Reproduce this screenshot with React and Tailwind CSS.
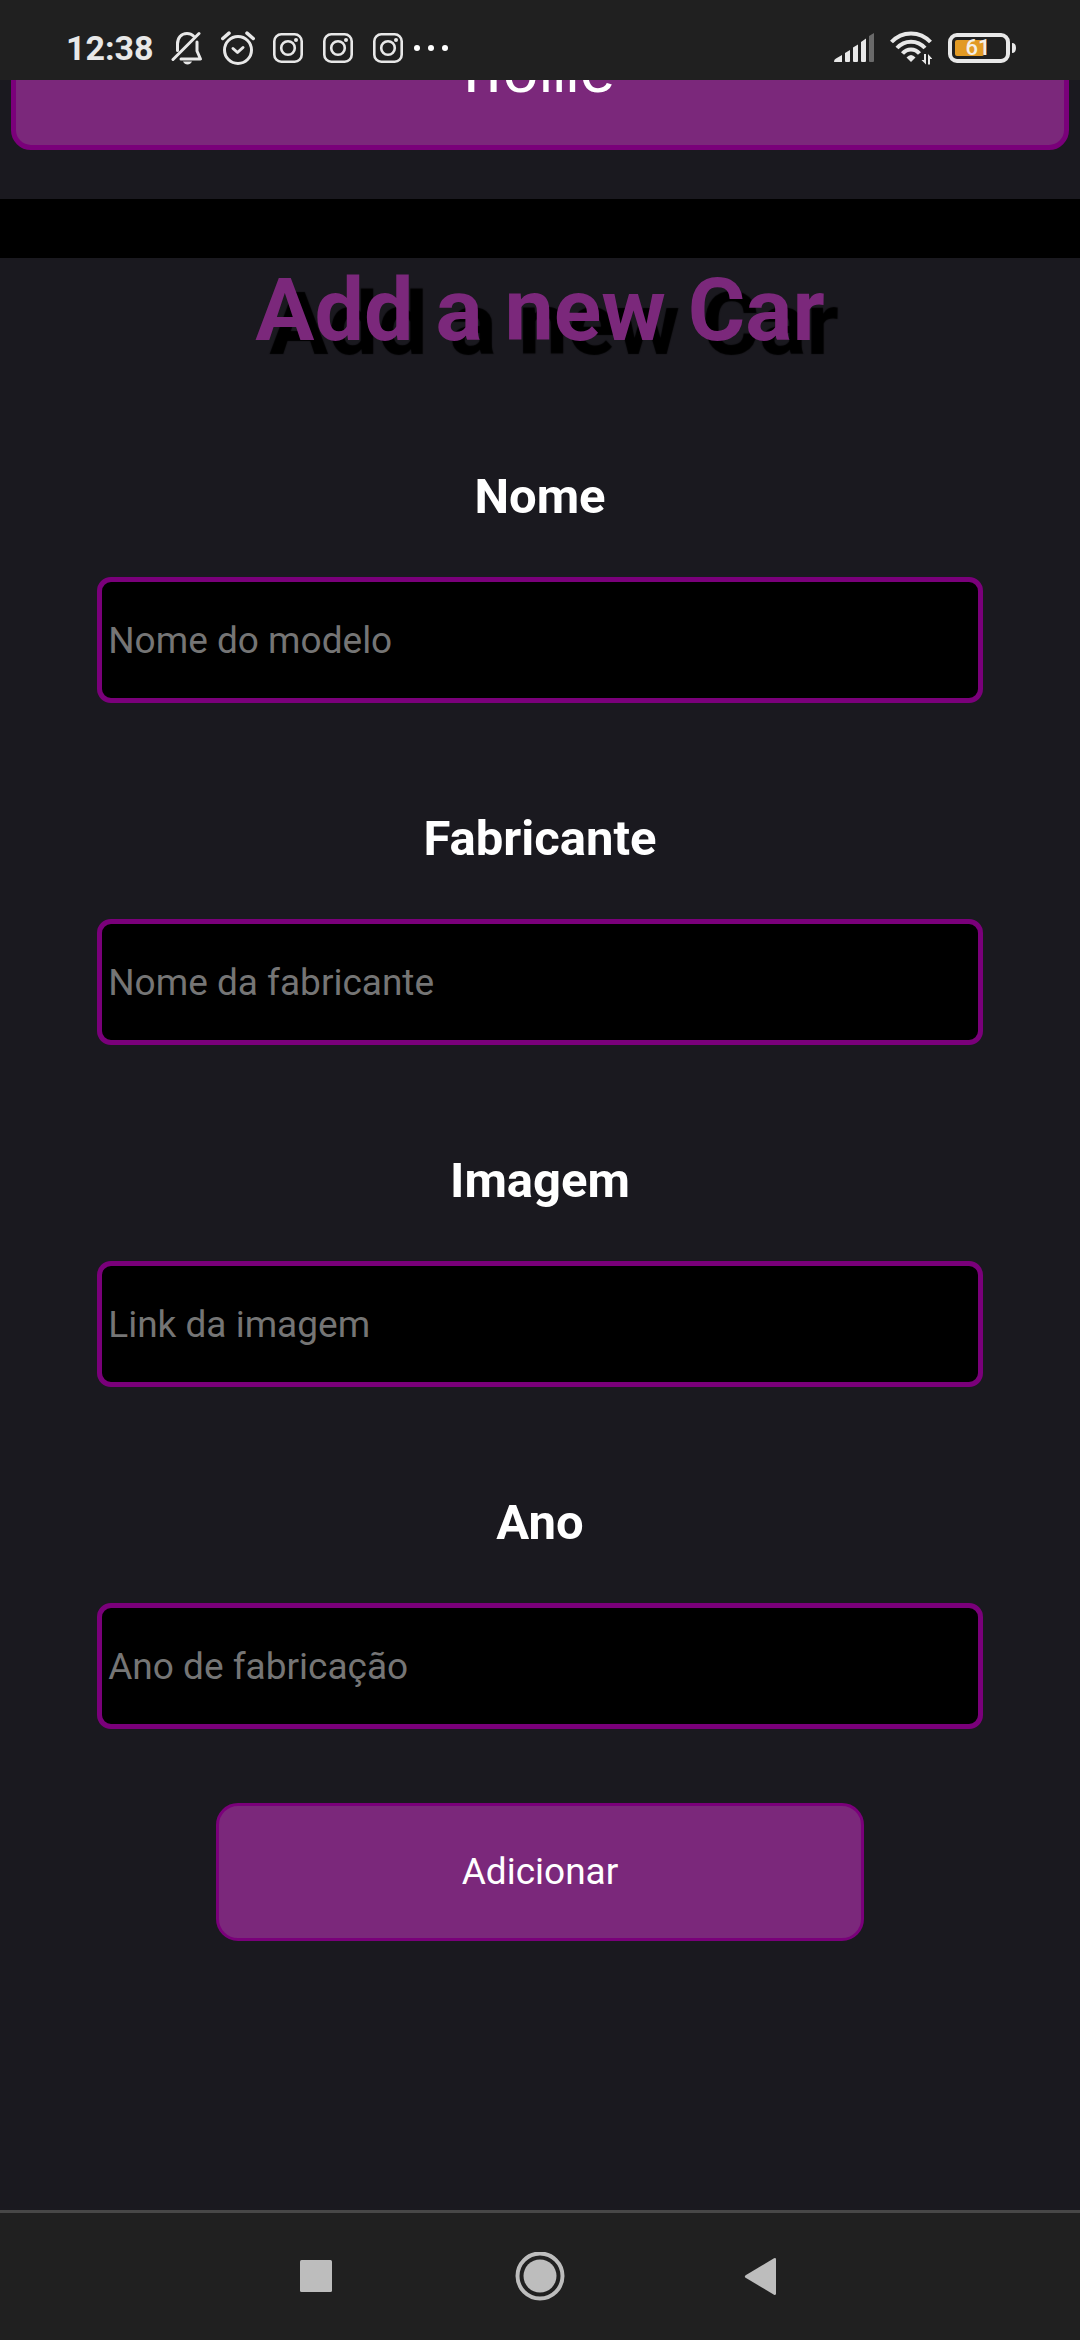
import React from "react";

const fields = [
  { id: "nome", label: "Nome", placeholder: "Nome do modelo" },
  { id: "fabricante", label: "Fabricante", placeholder: "Nome da fabricante" },
  { id: "imagem", label: "Imagem", placeholder: "Link da imagem" },
  { id: "ano", label: "Ano", placeholder: "Ano de fabricação" },
];

function MutedBell() {
  return (
    <svg width="32" height="34" viewBox="0 0 32 34" fill="none" stroke="#e8e8e8" strokeWidth="3" strokeLinecap="round" strokeLinejoin="round" aria-hidden="true">
      <path d="M6.5 19.5V13C6.500 7 10 2.500 16 2.500C19 2.500 21 3.500 22.500 5" />
      <path d="M26 11V20L29.500 28H10" />
      <path d="M2 28.500L28 2.500" />
      <path d="M12 30.500H21C20 32.500 18.500 33.500 16.500 33.500S13 32.500 12 30.500Z" fill="#e8e8e8" stroke="none" />
    </svg>
  );
}

function AlarmClock() {
  return (
    <svg width="34" height="34" viewBox="0 0 34 34" fill="none" stroke="#e8e8e8" strokeWidth="3" strokeLinecap="round" strokeLinejoin="round" aria-hidden="true">
      <circle cx="17" cy="19" r="13.500" />
      <path d="M12 17.500L16.500 21.500L22 16.500" />
      <path d="M1.800 7.500L8 2.200M26 2.200L32.200 7.500" strokeWidth="3.500" />
    </svg>
  );
}

function Instagram() {
  return (
    <svg width="30" height="30" viewBox="0 0 30 30" fill="none" stroke="#e8e8e8" aria-hidden="true">
      <rect x="1.300" y="1.300" width="27.400" height="27.400" rx="7" strokeWidth="2.600" />
      <circle cx="15" cy="15" r="6.800" strokeWidth="2.600" />
      <circle cx="23" cy="7" r="2" fill="#e8e8e8" stroke="none" />
    </svg>
  );
}

function Dots() {
  return (
    <svg width="34" height="6" viewBox="0 0 34 6" fill="#ffffff" aria-hidden="true">
      <circle cx="3" cy="3" r="3" />
      <circle cx="17" cy="3" r="3" />
      <circle cx="31" cy="3" r="3" />
    </svg>
  );
}

function Signal() {
  return (
    <svg width="40" height="30" viewBox="0 0 40 30" fill="#e8e8e8" aria-hidden="true">
      <path d="M0 28.500Q0 26.500 2 25.500L8 22V29H1Q0 29 0 28.500Z" />
      <path d="M11 20L16 17V28Q16 29 15 29H12Q11 29 11 28Z" />
      <path d="M19 14.500L24 11.500V28Q24 29 23 29H20Q19 29 19 28Z" />
      <path d="M27 9L32 5.500V28Q32 29 31 29H28Q27 29 27 28Z" />
      <path d="M35 3L40 0V28Q40 29 39 29H36Q35 29 35 28Z" fill="#6a6a6a" />
    </svg>
  );
}

function Wifi() {
  return (
    <svg width="42" height="34" viewBox="0 0 42 34" fill="none" stroke="#e8e8e8" strokeWidth="4" aria-hidden="true">
      <path d="M1.500 11C12 -0.500 30 -0.500 40.500 11" />
      <path d="M7 17C14.500 8.500 27.500 8.500 35 17" />
      <path d="M12.500 22.500C17 17 25 17 29.500 22.500" />
      <path d="M16.500 26.500Q21 21.500 25.500 26.500L21 31Z" fill="#e8e8e8" stroke="none" />
      <path d="M34 23V29H31.500L36 33.500V23ZM40 33.500V28H42.500L38 23V33.500Z" fill="#e8e8e8" stroke="none" />
    </svg>
  );
}

function Battery() {
  return (
    <div className="relative grid h-[30px] w-[68px] place-items-center pr-[8px]">
      <svg className="absolute inset-0" width="68" height="30" viewBox="0 0 68 30" aria-hidden="true">
        <rect x="2" y="2" width="58" height="26" rx="7" fill="none" stroke="#e8e8e8" strokeWidth="4" />
        <rect x="7" y="7" width="29" height="16" rx="2" fill="#e29a24" />
        <path d="M64 10Q68 10 68 15Q68 20 64 20Z" fill="#e8e8e8" />
      </svg>
      <span className="relative text-[22px] leading-[30px] font-medium text-[#f4efe6]">61</span>
    </div>
  );
}

function StatusBar() {
  return (
    <header className="flex h-[80px] shrink-0 items-center justify-between bg-[#202020] pr-[64px] pl-[66px] pt-[16px]">
      <div className="flex items-center">
        <time className="text-[34px] leading-[40px] font-bold text-[#e8e8e8]">12:38</time>
        <div className="ml-[17px] flex items-center gap-[18px]">
          <MutedBell />
          <AlarmClock />
        </div>
        <div className="ml-[18px] flex items-center gap-[20px]">
          <Instagram />
          <Instagram />
          <Instagram />
        </div>
        <div className="ml-[11px]">
          <Dots />
        </div>
      </div>
      <div className="flex items-center gap-[16px]">
        <Signal />
        <Wifi />
        <Battery />
      </div>
    </header>
  );
}

function NavButton({ label, children }) {
  return (
    <button type="button" aria-label={label} className="grid h-[127px] w-[224px] place-items-center">
      <svg width="50" height="50" viewBox="0 0 50 50" fill="#bdbdbd" aria-hidden="true">
        {children}
      </svg>
    </button>
  );
}

export default function App() {
  return (
    <div className="flex min-h-screen flex-col bg-[#1a191f] font-['Roboto',sans-serif] text-white">
      <StatusBar />

      <nav className="flex h-[70px] flex-col justify-end overflow-hidden px-[11px]">
        <a
          href="#home"
          className="flex h-[150px] shrink-0 items-center justify-center rounded-[20px] border-[5px] border-[#7a007a] bg-[#7b287b] font-['Liberation_Mono',monospace] text-[64px] leading-[76px]"
        >
          Home
        </a>
      </nav>

      <div className="mt-[49px] h-[59px] bg-black" />

      <main className="flex-1">
        <h1 className="text-center text-[88px] leading-[104px] font-bold text-[#7b287b] [text-shadow:14px_14px_1px_#000]">
          Add a new Car
        </h1>

        <form className="mt-[105px] flex flex-col items-center" onSubmit={(e) => e.preventDefault()}>
          <div className="flex w-[82%] flex-col gap-[106px]">
            {fields.map((f) => (
              <div key={f.id} className="flex flex-col gap-[50px]">
                <label htmlFor={f.id} className="text-center text-[49px] leading-[60px] font-bold">
                  {f.label}
                </label>
                <input
                  id={f.id}
                  type="text"
                  placeholder={f.placeholder}
                  className="h-[126px] w-full rounded-[14px] border-[5px] border-[#7a007a] bg-black px-[6px] text-[37px] text-white placeholder:text-[#757575]"
                />
              </div>
            ))}
          </div>
          <button
            type="submit"
            className="mt-[74px] h-[138px] w-[60%] rounded-[22px] border-[3px] border-[#7a007a] bg-[#7b287b] text-[37px]"
          >
            Adicionar
          </button>
        </form>
      </main>

      <footer className="flex shrink-0 justify-center border-t-[3px] border-[#474747] bg-[#202020]">
        <NavButton label="Recents">
          <rect x="9" y="8" width="32" height="32" rx="1.500" />
        </NavButton>
        <NavButton label="Home">
          <circle cx="25" cy="24" r="22.500" fill="none" stroke="#bdbdbd" strokeWidth="4" />
          <circle cx="25" cy="24" r="16.500" />
        </NavButton>
        <NavButton label="Back">
          <path d="M6.600 23.200L35 6.300Q37 5.500 37 7.500V41.500Q37 43.500 35 42.700L6.600 25.800Q5 24.500 6.600 23.200Z" />
        </NavButton>
      </footer>
    </div>
  );
}
